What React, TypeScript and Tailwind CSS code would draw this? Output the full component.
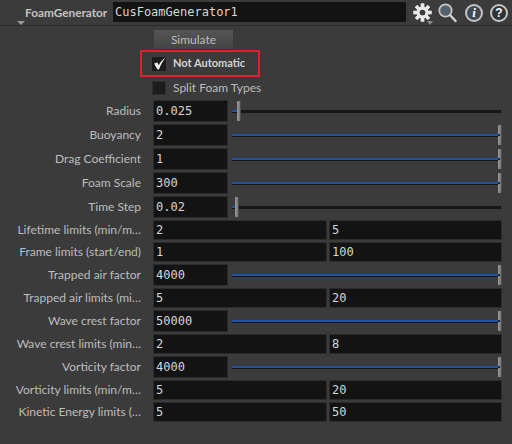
const labelFont = "font-['Lato',sans-serif] text-[12px] text-[#bdbdbd]";
const monoFont = "font-['DejaVu_Sans_Mono',monospace] text-[12px] text-[#d6d6d6]";

type Row =
  | { label: string; height: string; kind: "slider"; value: string; pos: number }
  | { label: string; height: string; kind: "pair"; a: string; b: string };

const rows: Row[] = [
  { label: "Radius", height: "h-[24px]", kind: "slider", value: "0.025", pos: 0.02 },
  { label: "Buoyancy", height: "h-[24px]", kind: "slider", value: "2", pos: 1 },
  { label: "Drag Coefficient", height: "h-[24px]", kind: "slider", value: "1", pos: 1 },
  { label: "Foam Scale", height: "h-[24px]", kind: "slider", value: "300", pos: 1 },
  { label: "Time Step", height: "h-[24px]", kind: "slider", value: "0.02", pos: 0.01 },
  { label: "Lifetime limits (min/m…", height: "h-[22px]", kind: "pair", a: "2", b: "5" },
  { label: "Frame limits (start/end)", height: "h-[22px]", kind: "pair", a: "1", b: "100" },
  { label: "Trapped air factor", height: "h-[24px]", kind: "slider", value: "4000", pos: 1 },
  { label: "Trapped air limits (mi…", height: "h-[22px]", kind: "pair", a: "5", b: "20" },
  { label: "Wave crest factor", height: "h-[24px]", kind: "slider", value: "50000", pos: 1 },
  { label: "Wave crest limits (min…", height: "h-[22px]", kind: "pair", a: "2", b: "8" },
  { label: "Vorticity factor", height: "h-[24px]", kind: "slider", value: "4000", pos: 1 },
  { label: "Vorticity limits (min/m…", height: "h-[22px]", kind: "pair", a: "5", b: "20" },
  { label: "Kinetic Energy limits (…", height: "h-[22px]", kind: "pair", a: "5", b: "50" },
];

function Field({ value, className }: { value: string; className: string }) {
  return (
    <div className={`${className} h-full bg-[#131313] border border-[#2b2b2b] flex items-center pl-[2px] ${monoFont}`}>
      {value}
    </div>
  );
}

function Slider({ pos }: { pos: number }) {
  return (
    <div className="relative flex-1 h-full ml-[4px] mr-[1px] flex items-center">
      <div className="h-[3px] w-full bg-[#161616] flex items-center">
        <div className="h-[2px] bg-[#1f55a6]" style={{ width: `${pos * 100}%` }} />
      </div>
      <div
        className="absolute top-[1px] w-[4px] h-[20px] bg-gradient-to-r from-[#9a9a9a] to-[#777777] border-r border-[#4c4c4c] rounded-[1px] flex items-center"
        style={{ left: pos === 1 ? "calc(100% - 3px)" : `${pos * 100}%` }}
      >
        {pos === 1 && <div className="w-[2px] h-[2px] bg-[#222222]" />}
      </div>
    </div>
  );
}

function Gear() {
  const teeth = [0, 45, 90, 135, 180, 225, 270, 315];
  return (
    <svg width="19" height="19" viewBox="0 0 20 20">
      {teeth.map((a) => (
        <rect key={a} x="8.2" y="0.5" width="3.6" height="19" fill="#e8e8e8" transform={`rotate(${a} 10 10)`} />
      ))}
      <circle cx="10" cy="10" r="6.2" fill="#e8e8e8" />
      <circle cx="10" cy="10" r="3" fill="#3b3b3b" />
    </svg>
  );
}

function Magnifier() {
  return (
    <svg width="19" height="20" viewBox="0 0 19 20">
      <circle cx="7.5" cy="7.5" r="6.2" fill="#55626b" stroke="#c6c6c6" strokeWidth="1.8" />
      <path d="M12 12 L17.5 18" stroke="#d4d4d4" strokeWidth="2.4" strokeLinecap="round" />
    </svg>
  );
}

export default function App() {
  return (
    <div className="w-[512px] h-[444px] bg-[#3b3b3b] overflow-hidden">
      {/* header */}
      <div className="h-[26px] flex items-center border-b border-[#2a2a2a] relative">
        <span className="ml-[25px] w-[87px] whitespace-nowrap font-['Lato',sans-serif] font-bold text-[11.8px] text-[#c4c4c4]">FoamGenerator</span>
        <div className={`ml-[1px] w-[293px] h-[20px] mt-[-1px] bg-[#131313] flex items-center pl-[2px] ${monoFont}`}>CusFoamGenerator1</div>
        <div className="ml-[7px] flex items-center">
          <Gear />
          <div className="ml-[6px]">
            <Magnifier />
          </div>
          <div className="ml-[8px] w-[18px] h-[18px] rounded-full border-2 border-[#c4c4c4] bg-[#3f4a52] flex items-center justify-center font-['Liberation_Serif',serif] italic font-bold text-[13px] text-white">i</div>
          <div className="ml-[7px] w-[18px] h-[18px] rounded-full border-2 border-[#c4c4c4] bg-[#2e3338] flex items-center justify-center font-['Liberation_Sans',sans-serif] font-bold text-[12px] text-white">?</div>
        </div>
        <div className="absolute left-[17px] top-[21px] border-x-[4px] border-x-transparent border-t-[4px] border-t-[#9a9a9a]" />
        <div className="absolute left-[427px] top-[21px] border-x-[3px] border-x-transparent border-t-[4px] border-t-[#8a8a8a]" />
      </div>

      {/* simulate */}
      <div className="mt-[4px] ml-[154px] w-[79px] h-[20px] bg-gradient-to-b from-[#555555] to-[#444444] border-b border-[#2e2e2e] flex items-center justify-center font-['Lato',sans-serif] text-[12px] text-[#bdbdbd]">
        Simulate
      </div>

      {/* toggles */}
      <div className="ml-[140px] w-[120px] h-[27px] border-2 border-[#e0202c] flex items-center pl-[10px]">
        <div className="w-[14px] h-[14px] bg-[#1c1c1c] flex items-center justify-center">
          <svg width="13" height="13" viewBox="0 0 12 12">
            <path d="M1 6 L4 5 L5.2 7.5 C7 4.5 9 2 11.5 .5 C9 4 7 7.5 5.5 11.5 L4.2 11.5 Z" fill="#f0f0f0" />
          </svg>
        </div>
        <span className="ml-[7px] whitespace-nowrap font-['Lato',sans-serif] font-bold text-[11px] text-[#d4d4d4]">Not Automatic</span>
      </div>
      <div className="ml-[152px] h-[21px] flex items-center">
        <div className="w-[14px] h-[14px] bg-[#1c1c1c] border border-[#2e2e2e]" />
        <span className={`ml-[7px] ${labelFont}`}>Split Foam Types</span>
      </div>

      {/* parameters */}
      <div className="mt-[1px] flex flex-col">
        {rows.map((row) => (
          <div key={row.label} className={`${row.height} flex py-[1px]`}>
            <div className={`w-[141px] text-right self-center whitespace-nowrap ${labelFont}`}>{row.label}</div>
            <div className="ml-[12px] w-[349px] flex h-full">
              {row.kind === "slider" ? (
                <>
                  <Field value={row.value} className="w-[75px]" />
                  <Slider pos={row.pos} />
                </>
              ) : (
                <>
                  <Field value={row.a} className="w-[174px]" />
                  <Field value={row.b} className="ml-[2px] w-[173px]" />
                </>
              )}
            </div>
          </div>
        ))}
      </div>
    </div>
  );
}
